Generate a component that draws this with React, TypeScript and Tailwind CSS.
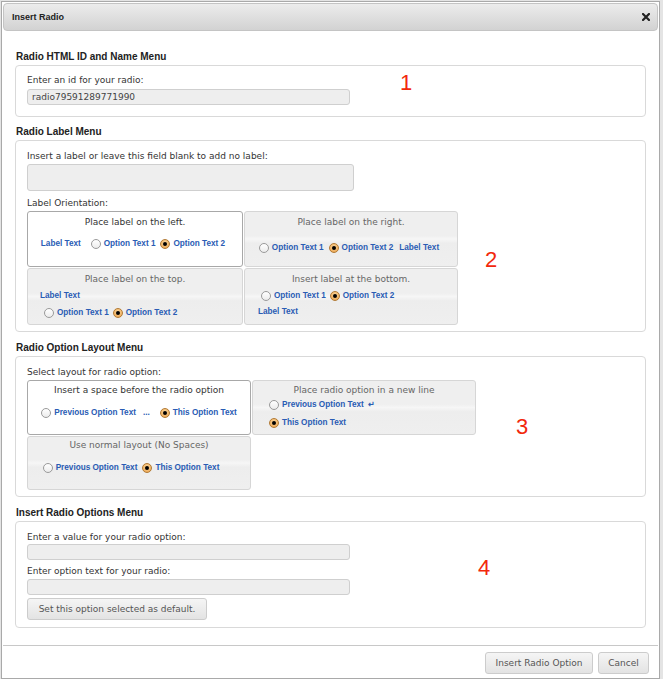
import React from "react";

const body = "font-['DejaVu_Sans',sans-serif]";
const arial = "font-['Liberation_Sans',Arial,sans-serif]";
const band =
  "bg-[linear-gradient(180deg,#efefef_0%,#efefef_44%,#f6f6f6_50%,#ededed_58%,#efefef_100%)]";

function Radio({ on = false }: { on?: boolean }) {
  return on ? (
    <span className="flex h-[10px] w-[10px] shrink-0 items-center justify-center rounded-full border border-[#b27a34] bg-[radial-gradient(circle_at_50%_35%,#fbd69a,#e9a04a)]">
      <span className="h-[4px] w-[4px] rounded-full bg-black" />
    </span>
  ) : (
    <span className="h-[10px] w-[10px] shrink-0 rounded-full border border-[#9a9a9a] bg-[linear-gradient(180deg,#ffffff,#ececec)]" />
  );
}

function Blue({ children }: { children: React.ReactNode }) {
  return (
    <span className={`${arial} block text-[8.2px] font-bold leading-[12px] text-[#2a5cb4]`}>
      {children}
    </span>
  );
}

function Opt({ text, on = false, className = "" }: { text: string; on?: boolean; className?: string }) {
  return (
    <span className={`flex items-center gap-[3px] ${className}`}>
      <Radio on={on} />
      <Blue>{text}</Blue>
    </span>
  );
}

function Card({
  title,
  selected = false,
  className = "",
  children,
}: {
  title: string;
  selected?: boolean;
  className?: string;
  children: React.ReactNode;
}) {
  return (
    <div
      className={`rounded-[3px] border text-[9px] leading-[12px] ${
        selected ? "border-[#a8a8a8] bg-white" : `border-[#d6d6d6] ${band}`
      } ${className}`}
    >
      <div className={`text-center ${selected ? "text-[#333]" : "text-[#666]"}`}>{title}</div>
      {children}
    </div>
  );
}

function Field({ value = "", tall = false }: { value?: string; tall?: boolean }) {
  return (
    <div
      className={`flex items-center rounded-[3px] border border-[#cfcfcf] bg-[#eeeeee] px-[4px] text-[9px] leading-[12px] text-[#444] ${
        tall ? "h-[27px] w-[327px]" : "h-[16px] w-[323px]"
      }`}
    >
      {value}
    </div>
  );
}

function Btn({ children, className = "" }: { children: React.ReactNode; className?: string }) {
  return (
    <div
      className={`flex h-[22px] items-center justify-center rounded-[3px] border border-[#cccccc] bg-[linear-gradient(180deg,#f5f5f5,#e3e3e3)] text-[9px] leading-[12px] text-[#555] ${className}`}
    >
      {children}
    </div>
  );
}

function Section({
  title,
  num,
  numPos,
  className = "",
  children,
}: {
  title: string;
  num: string;
  numPos: string;
  className?: string;
  children: React.ReactNode;
}) {
  return (
    <section className={className}>
      <h2 className={`${arial} mb-[2px] pl-[1px] text-[10px] font-bold leading-[12px] text-[#222]`}>
        {title}
      </h2>
      <div className="relative rounded-[4px] border border-[#d9d9d9] bg-white px-[11px] text-[9px] leading-[12px]">
        {children}
        <span className={`absolute ${arial} text-[22px] leading-none text-[#f2280c] ${numPos}`}>
          {num}
        </span>
      </div>
    </section>
  );
}

export default function App() {
  return (
    <div className={`h-[679px] w-[663px] overflow-hidden bg-[#e4e4e4] ${body}`}>
      <div className="ml-[1px] mt-[1px] flex h-[678px] w-[659px] flex-col border border-[#a9a9a9] bg-white p-[1px]">
        {/* Title bar */}
        <div className="flex h-[28px] items-center justify-between rounded-[4px] border border-[#c4c4c4] bg-[linear-gradient(180deg,#ececec,#d2d2d2)] pl-[8px] pr-[7px]">
          <span className={`${arial} text-[9px] font-bold leading-[12px] text-[#222]`}>Insert Radio</span>
          <svg width="8" height="8" viewBox="0 0 8 8">
            <path d="M1 1L7 7M7 1L1 7" stroke="#222" strokeWidth="2.2" strokeLinecap="square" />
          </svg>
        </div>

        <div className="flex-1 px-[12px] pt-[20px] text-[#333]">
          <Section title="Radio HTML ID and Name Menu" num="1" numPos="left-[384px] top-[6px]">
            <div className="pb-[11px] pt-[8px]">
              <div>Enter an id for your radio:</div>
              <div className="mt-[3px]">
                <Field value="radio79591289771990" />
              </div>
            </div>
          </Section>

          <Section
            title="Radio Label Menu"
            num="2"
            numPos="left-[469px] top-[108px]"
            className="mt-[9px]"
          >
            <div className="pb-[6px] pt-[9px]">
              <div>Insert a label or leave this field blank to add no label:</div>
              <div className="mt-[2px]">
                <Field tall />
              </div>
              <div className="mt-[6px]">Label Orientation:</div>
              <div className="mt-[2px] grid grid-cols-[216px_214px] gap-x-[1px] gap-y-[1px]">
                <Card title="Place label on the left." selected className="h-[56px] pt-[4px]">
                  <div className="mt-[10px] flex items-center justify-center pr-[4px]">
                    <span className="mr-[10px]">
                      <Blue>Label Text</Blue>
                    </span>
                    <Opt text="Option Text 1" />
                    <Opt text="Option Text 2" on className="ml-[5px]" />
                  </div>
                </Card>
                <Card title="Place label on the right." className="h-[56px] pt-[4px]">
                  <div className="mt-[14px] flex items-center justify-center pr-[4px]">
                    <Opt text="Option Text 1" />
                    <Opt text="Option Text 2" on className="ml-[5px]" />
                    <span className="ml-[6px]">
                      <Blue>Label Text</Blue>
                    </span>
                  </div>
                </Card>
                <Card title="Place label on the top." className="h-[57px] pt-[4px]">
                  <div className="mt-[5px] pl-[12px]">
                    <Blue>Label Text</Blue>
                  </div>
                  <div className="mt-[5px] flex items-center pl-[16px]">
                    <Opt text="Option Text 1" />
                    <Opt text="Option Text 2" on className="ml-[4px]" />
                  </div>
                </Card>
                <Card title="Insert label at the bottom." className="h-[57px] pt-[4px]">
                  <div className="mt-[5px] flex items-center pl-[16px]">
                    <Opt text="Option Text 1" />
                    <Opt text="Option Text 2" on className="ml-[4px]" />
                  </div>
                  <div className="mt-[4px] pl-[13px]">
                    <Blue>Label Text</Blue>
                  </div>
                </Card>
              </div>
            </div>
          </Section>

          <Section
            title="Radio Option Layout Menu"
            num="3"
            numPos="left-[500px] top-[59px]"
            className="mt-[10px]"
          >
            <div className="pb-[6px] pt-[9px]">
              <div>Select layout for radio option:</div>
              <div className="mt-[2px] grid grid-cols-[224px_224px] gap-x-[1px] gap-y-[1px]">
                <Card
                  title="Insert a space before the radio option"
                  selected
                  className="h-[55px] pt-[3px]"
                >
                  <div className="mt-[11px] flex items-center justify-center">
                    <Opt text="Previous Option Text" />
                    <span className="ml-[7px] mr-[10px]">
                      <Blue>...</Blue>
                    </span>
                    <Opt text="This Option Text" on />
                  </div>
                </Card>
                <Card title="Place radio option in a new line" className="h-[55px] pt-[3px]">
                  <div className="mt-[3px] flex items-center pl-[16px]">
                    <Opt text="Previous Option Text" />
                    <span className="ml-[4px]">
                      <Blue>↵</Blue>
                    </span>
                  </div>
                  <div className="mt-[6px] flex items-center pl-[16px]">
                    <Opt text="This Option Text" on />
                  </div>
                </Card>
                <Card title="Use normal layout (No Spaces)" className="h-[54px] pt-[2px]">
                  <div className="mt-[11px] flex items-center justify-center pr-[16px]">
                    <Opt text="Previous Option Text" />
                    <Opt text="This Option Text" on className="ml-[5px]" />
                  </div>
                </Card>
              </div>
            </div>
          </Section>

          <Section
            title="Insert Radio Options Menu"
            num="4"
            numPos="left-[462px] top-[35px]"
            className="mt-[10px]"
          >
            <div className="pb-[7px] pt-[9px]">
              <div>Enter a value for your radio option:</div>
              <div className="mt-[1px]">
                <Field />
              </div>
              <div className="mt-[5px]">Enter option text for your radio:</div>
              <div className="mt-[2px]">
                <Field />
              </div>
              <Btn className="mt-[3px] w-[180px]">Set this option selected as default.</Btn>
            </div>
          </Section>
        </div>

        {/* Footer */}
        <div className="flex h-[32px] justify-end gap-[5px] border-t border-[#c8c8c8] pr-[9px] pt-[6px]">
          <Btn className="w-[108px]">Insert Radio Option</Btn>
          <Btn className="w-[51px]">Cancel</Btn>
        </div>
      </div>
    </div>
  );
}
